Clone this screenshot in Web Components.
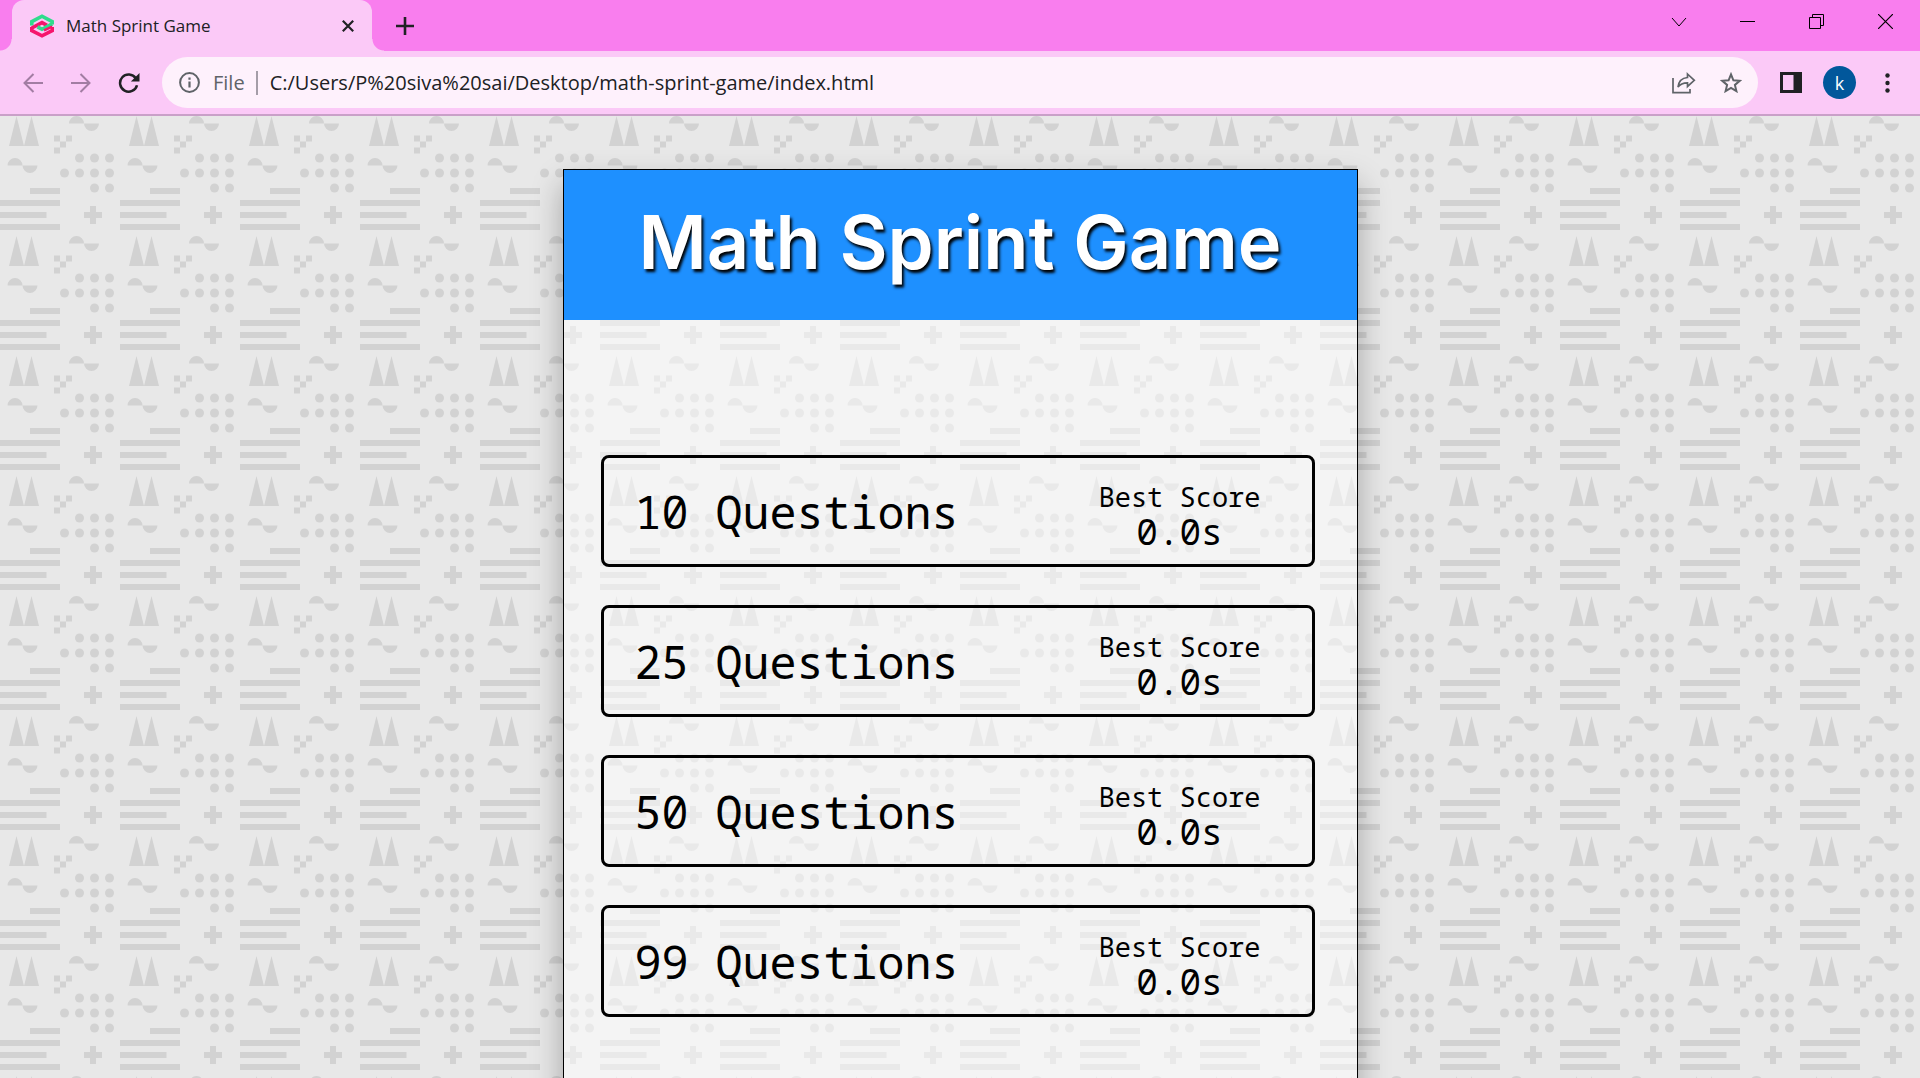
<!DOCTYPE html>
<html lang="en">
<head>
<meta charset="utf-8">
<title>Math Sprint Game</title>
<style>
body { margin: 0; }
</style>
</head>
<body>
<browser-window>
  <browser-tab slot="tabs">Math Sprint Game</browser-tab>
  <address-bar slot="address" scheme="File" url="C:/Users/P%20siva%20sai/Desktop/math-sprint-game/index.html"></address-bar>
  <game-page>
    <game-card heading="Math Sprint Game">
      <question-option score="0.0s">10 Questions</question-option>
      <question-option score="0.0s">25 Questions</question-option>
      <question-option score="0.0s">50 Questions</question-option>
      <question-option score="0.0s">99 Questions</question-option>
    </game-card>
  </game-page>
</browser-window>

<script>
const BASE = `
  :host, *, *::before, *::after { box-sizing: border-box; }
  button { font: inherit; color: inherit; background: none; border: 0; padding: 0; margin: 0; display: flex; align-items: center; justify-content: center; }
  svg { display: block; flex: none; }
`;

class View extends HTMLElement {
  connectedCallback() {
    if (this.shadowRoot) return;
    this.attachShadow({ mode: 'open' }).innerHTML = `<style>${BASE}</style>` + this.view();
  }
}

customElements.define('browser-window', class extends View {
  view() {
    return `
    <style>
      :host { display: flex; flex-direction: column; height: 100vh; overflow: hidden; font-family: "Open Sans", "Noto Sans", sans-serif; color: #202124; }
      .strip { display: flex; align-items: flex-end; height: 51px; flex: none; background: #f97eee; padding-left: 12px; }
      .new { width: 42px; height: 51px; margin-left: 12px; }
      .controls { display: flex; margin-left: auto; height: 51px; color: #000; }
      .controls button { width: 69px; height: 43px; }
      .bar { display: flex; align-items: center; height: 65px; flex: none; background: #fbc9f7; border-bottom: 2px solid #c9a0c8; padding: 0 18px 0 9px; }
      .nav { width: 48px; height: 48px; }
      .dim { color: #a27da3; }
      .address { flex: 1; margin: 0 16px 0 9px; }
      .panel { width: 33px; height: 33px; }
      .profile { width: 33px; height: 33px; border-radius: 50%; background: #01579b; color: #fff; font-size: 18px; line-height: 24px; margin: 0 16px; }
      .more { width: 30px; height: 33px; }
      main { flex: 1; min-height: 0; overflow: hidden; }
    </style>
    <header>
      <div class="strip">
        <slot name="tabs"></slot>
        <button class="new" aria-label="New tab"><svg width="18" height="18" viewBox="0 0 18 18" stroke="currentColor" stroke-width="2.6" fill="none"><path d="M9 0v18M0 9h18"/></svg></button>
        <div class="controls">
          <button aria-label="Search tabs"><svg width="16" height="10" viewBox="0 0 16 10" stroke="currentColor" fill="none"><path d="M1 1l7 8 7-8"/></svg></button>
          <button aria-label="Minimize"><svg width="15" height="15" viewBox="0 0 15 15" stroke="currentColor" fill="none"><path d="M0 7.5h15"/></svg></button>
          <button aria-label="Restore"><svg width="15" height="15" viewBox="0 0 15 15" stroke="currentColor" fill="none"><path d="M.5 3.500h11v11H.5zM3.500 3.500v-3h11v11h-3"/></svg></button>
          <button aria-label="Close"><svg width="15" height="15" viewBox="0 0 15 15" stroke="currentColor" stroke-width="1.2" fill="none"><path d="M0 0l15 15M15 0L0 15"/></svg></button>
        </div>
      </div>
      <div class="bar">
        <button class="nav dim" aria-label="Back"><svg width="20" height="20" viewBox="0 0 20 20" stroke="currentColor" stroke-width="2" fill="none"><path d="M20 10H2M10.500 1L1.500 10l9 9"/></svg></button>
        <button class="nav dim" aria-label="Forward"><svg width="20" height="20" viewBox="0 0 20 20" stroke="currentColor" stroke-width="2" fill="none"><path d="M0 10h18M9.500 1l9 9-9 9"/></svg></button>
        <button class="nav" aria-label="Reload"><svg width="22" height="20" viewBox="0 0 22 20"><path d="M17.800 5.200A8.600 8.600 0 1 0 19 12.200" stroke="currentColor" stroke-width="2.500" fill="none"/><path d="M21.500 0v8.600h-8.600z" fill="currentColor"/></svg></button>
        <div class="address"><slot name="address"></slot></div>
        <button class="panel" aria-label="Side panel"><svg width="22" height="21" viewBox="0 0 22 21"><path fill="currentColor" fill-rule="evenodd" d="M0 0h22v21H0zM3 3v15h10.500V3z"/></svg></button>
        <button class="profile" aria-label="Profile">k</button>
        <button class="more" aria-label="Menu"><svg width="5" height="20" viewBox="0 0 5 20" fill="currentColor"><circle cx="2.500" cy="2.500" r="2.200"/><circle cx="2.500" cy="10" r="2.200"/><circle cx="2.500" cy="17.500" r="2.200"/></svg></button>
      </div>
    </header>
    <main><slot></slot></main>`;
  }
});

customElements.define('browser-tab', class extends View {
  view() {
    return `
    <style>
      :host { display: flex; align-items: center; width: 360px; height: 51px; padding: 0 14px 0 18px; background: #fbc9f7; border-radius: 12px 12px 0 0; position: relative; font-size: 17px; line-height: 24px; }
      :host::before, :host::after { content: ""; position: absolute; bottom: 0; width: 12px; height: 12px; }
      :host::before { left: -12px; background: radial-gradient(circle at 0 0, transparent 11px, #fbc9f7 12px); }
      :host::after { right: -12px; background: radial-gradient(circle at 100% 0, transparent 11px, #fbc9f7 12px); }
      .title { flex: 1; margin-left: 12px; white-space: nowrap; }
      button { width: 20px; height: 24px; }
    </style>
    <svg width="24" height="24" viewBox="0 0 24 24" fill="none" stroke-width="3.600">
      <path d="M1.800 11.500V7.600L12 2.200l10.200 5.400v3" stroke="#2fdc8c"/>
      <path d="M22.200 13v3.600L12 21.800 1.800 16.600V13" stroke="#f5156c"/>
      <path d="M1.800 14L12 8.600l5 2.700" stroke="#f5156c"/>
      <path d="M22.200 9.800L12 15.300l-4.500-2.400" stroke="#2fdc8c"/>
      <path d="M14 16.400l8.200-3.800" stroke="#f5156c" stroke-width="2.400"/>
    </svg>
    <span class="title"><slot></slot></span>
    <button aria-label="Close tab"><svg width="12" height="12" viewBox="0 0 12 12" stroke="currentColor" stroke-width="2.200" fill="none"><path d="M.8.8l10.400 10.400M11.200.8L.8 11.200"/></svg></button>`;
  }
});

customElements.define('address-bar', class extends View {
  view() {
    return `
    <style>
      :host { display: flex; align-items: center; height: 51px; border-radius: 26px; background: #fef1fc; padding: 0 15px 0 17px; color: #5f6368; font-size: 20px; line-height: 28px; }
      .scheme { margin-left: 13px; }
      .rule { width: 2px; height: 24px; background: #a59da8; margin: 0 12px 0 11px; }
      input { flex: 1; min-width: 0; border: 0; padding: 0; background: none; font: inherit; color: #202124; outline: 0; }
      button { width: 24px; height: 24px; }
      .star { margin-left: 23px; }
    </style>
    <svg width="21" height="21" viewBox="0 0 21 21"><circle cx="10.500" cy="10.500" r="9.400" fill="none" stroke="currentColor" stroke-width="2"/><path d="M9.400 9.500h2.200v6H9.400zM9.400 5.500h2.200v2.200H9.400z" fill="currentColor"/></svg>
    <span class="scheme">${this.getAttribute('scheme')}</span>
    <span class="rule"></span>
    <input aria-label="Address" spellcheck="false" value="${this.getAttribute('url')}">
    <button aria-label="Share"><svg width="24" height="22" viewBox="0 0 24 22" fill="none" stroke="currentColor" stroke-width="1.700"><path d="M1 6v14.600h17V17"/><path d="M15.500 2l6.800 6.300-6.800 6.200v-3.700c-4 0-7.300 1-9.500 4.200.6-5.300 4-9 9.500-9.500z"/></svg></button>
    <button class="star" aria-label="Bookmark"><svg width="22" height="21" viewBox="0 0 22 21" fill="none" stroke="currentColor" stroke-width="2"><path d="M11 2.400l2.400 5.900 6.300.5-4.800 4.100 1.500 6.200L11 15.800l-5.400 3.300 1.500-6.200-4.800-4.100 6.300-.5z"/></svg></button>`;
  }
});

customElements.define('game-page', class extends View {
  view() {
    return `
    <style>
      :host { display: block; position: relative; height: 100%; overflow: hidden; background: #e8e8e8; padding-top: 53px; isolation: isolate; }
      .pattern { position: absolute; inset: 0; width: 100%; height: 100%; z-index: -1; }
    </style>
    <svg class="pattern" aria-hidden="true">
      <defs>
        <pattern id="shapes" width="120" height="120" patternUnits="userSpaceOnUse">
          <g fill="#d2d2d2">
            <path d="M9 30L16.500 0 24 30zM24 30L31.500 0 39 30z"/>
            <path d="M69 7.500a7.500 7.500 0 0 1 15 0h15a7.500 7.500 0 0 1-15 0z"/>
            <path d="M7.500 49.500a7.500 7.500 0 0 1 15 0h15a7.500 7.500 0 0 1-15 0z"/>
            <path d="M54 19.500h6v6h6v-6h6v6h-6v6h-6v6h-6v-6h6v-6h-6z"/>
            <path d="M30 72h30v6H30zM0 84h60v6H0zM0 96h46.500v6H0zM0 108h60v6H0z"/>
            <path d="M90 90h6v6h6v6h-6v6h-6v-6h-6v-6h6z"/>
            <circle cx="79.500" cy="42" r="4.500"/><circle cx="94.500" cy="42" r="4.500"/><circle cx="109.500" cy="42" r="4.500"/>
            <circle cx="64.500" cy="57" r="4.500"/><circle cx="79.500" cy="57" r="4.500"/><circle cx="94.500" cy="57" r="4.500"/><circle cx="109.500" cy="57" r="4.500"/>
            <circle cx="94.500" cy="72" r="4.500"/><circle cx="109.500" cy="72" r="4.500"/>
          </g>
        </pattern>
      </defs>
      <rect width="100%" height="100%" fill="url(#shapes)"/>
    </svg>
    <slot></slot>`;
  }
});

customElements.define('game-card', class extends View {
  view() {
    return `
    <style>
      :host { display: block; width: 795px; max-width: 100%; min-height: 1050px; margin: 0 auto; border: 1px solid #000; background: rgba(255,255,255,.5); box-shadow: 0 15px 30px rgba(0,0,0,.3); }
      header { height: 150px; background: dodgerblue; display: flex; align-items: center; justify-content: center; padding-bottom: 7px; }
      h1 { margin: 0; font: 600 74px/108px Inter, sans-serif; color: #fff; text-shadow: 2px 3px 3px #000; white-space: nowrap; }
      form { display: flex; flex-direction: column; gap: 38px; padding: 135px 42px 0 37px; }
    </style>
    <header><h1>${this.getAttribute('heading')}</h1></header>
    <form><slot></slot></form>`;
  }
});

customElements.define('question-option', class extends View {
  view() {
    return `
    <style>
      :host { display: block; font-family: "Noto Sans Mono", "Liberation Mono", monospace; color: #000; }
      button { width: 100%; height: 112px; border: 3px solid #000; border-radius: 8px; justify-content: space-between; padding: 2px 51px 0 31px; text-align: center; }
      .count { font-size: 45px; line-height: 54px; }
      .best { display: flex; flex-direction: column; padding-top: 5px; }
      .label { font-size: 27px; line-height: 34px; }
      .score { font-size: 36px; line-height: 36px; }
    </style>
    <button type="button">
      <span class="count"><slot></slot></span>
      <span class="best"><span class="label">Best Score</span><span class="score">${this.getAttribute('score')}</span></span>
    </button>`;
  }
});
</script>
</body>
</html>
